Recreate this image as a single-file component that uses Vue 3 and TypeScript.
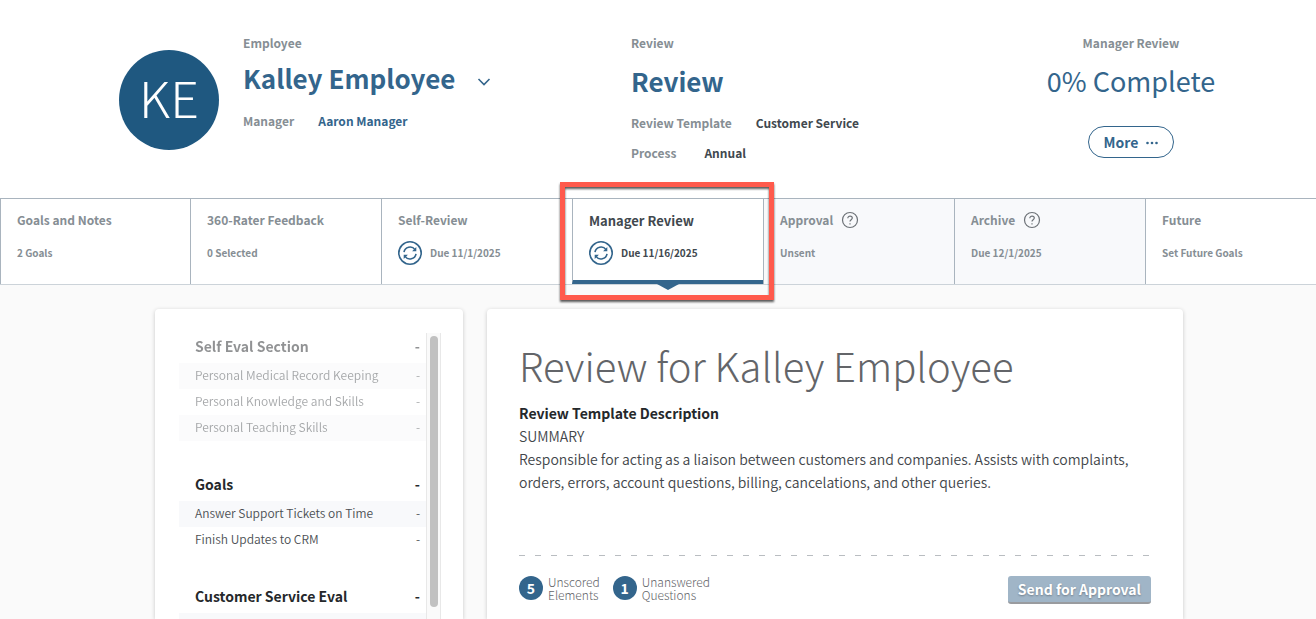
<script setup lang="ts">
interface Step {
  title: string
  note: string
  due?: boolean
  help?: boolean
  locked?: boolean
  active?: boolean
}

interface Section {
  title: string
  muted?: boolean
  items: string[]
}

const steps: Step[] = [
  { title: 'Goals and Notes', note: '2 Goals' },
  { title: '360-Rater Feedback', note: '0 Selected' },
  { title: 'Self-Review', note: 'Due 11/1/2025', due: true },
  { title: 'Manager Review', note: 'Due 11/16/2025', due: true, active: true },
  { title: 'Approval', note: 'Unsent', help: true, locked: true },
  { title: 'Archive', note: 'Due 12/1/2025', help: true, locked: true },
  { title: 'Future', note: 'Set Future Goals' },
]

const sections: Section[] = [
  {
    title: 'Self Eval Section',
    muted: true,
    items: ['Personal Medical Record Keeping', 'Personal Knowledge and Skills', 'Personal Teaching Skills'],
  },
  { title: 'Goals', items: ['Answer Support Tickets on Time', 'Finish Updates to CRM'] },
  { title: 'Customer Service Eval', items: [''] },
]
</script>

<template>
  <div class="page">
    <header class="summary">
      <div class="person">
        <div class="avatar">KE</div>
        <div>
          <div class="label">Employee</div>
          <div class="name-row">
            <h1 class="title">Kalley Employee</h1>
            <button class="chevron" type="button" aria-label="Switch employee">
              <svg viewBox="0 0 14 10" width="14" height="10"><path d="M1.5 2 7 7.5 12.5 2" /></svg>
            </button>
          </div>
          <div class="fact"><span class="label">Manager</span><a href="#">Aaron Manager</a></div>
        </div>
      </div>

      <div class="review">
        <div class="label">Review</div>
        <h2 class="title">Review</h2>
        <div class="fact"><span class="label">Review Template</span><span>Customer Service</span></div>
        <div class="fact process"><span class="label">Process</span><span>Annual</span></div>
      </div>

      <div class="progress">
        <div class="label">Manager Review</div>
        <div class="title percent">0% Complete</div>
        <button class="more" type="button">
          More
          <svg viewBox="0 0 12 4" width="12" height="4"><circle cx="1.5" cy="2" r="1.3" /><circle cx="6" cy="2" r="1.3" /><circle cx="10.5" cy="2" r="1.3" /></svg>
        </button>
      </div>
    </header>

    <nav class="steps">
      <a
        v-for="step in steps"
        :key="step.title"
        href="#"
        class="step"
        :class="{ active: step.active, locked: step.locked }"
      >
        <span class="step-title">
          {{ step.title }}
          <svg v-if="step.help" class="help" viewBox="0 0 18 18" width="18" height="18">
            <circle cx="9" cy="9" r="7.5" />
            <path d="M6.8 7.2C6.8 4.4 11.3 4.5 11.3 7.1 11.3 8.8 9 8.8 9 10.6" />
            <path d="M9 12.2V13.4" />
          </svg>
        </span>
        <span class="step-note">
          <svg v-if="step.due" class="sync" viewBox="0 0 24 24" width="24" height="24">
            <circle cx="12" cy="12" r="11.2" />
            <path d="M6 11.2A6.1 6.1 0 0 1 17 8.6M18 12.8A6.1 6.1 0 0 1 7 15.4" />
            <path class="tip" d="M18.3 6V10.2H14.1ZM5.7 18V13.8H9.9Z" />
          </svg>
          {{ step.note }}
        </span>
        <span v-if="step.active" class="highlight"></span>
      </a>
    </nav>

    <main class="body">
      <aside class="card outline">
        <div class="outline-list">
          <section v-for="section in sections" :key="section.title" :class="{ muted: section.muted }">
            <h3><span>{{ section.title }}</span><span>-</span></h3>
            <ul>
              <li v-for="item in section.items" :key="item">
                <template v-if="item"><span>{{ item }}</span><span>-</span></template>
              </li>
            </ul>
          </section>
        </div>
        <div class="track"><div class="thumb"></div></div>
      </aside>

      <article class="card content">
        <h2 class="headline">Review for Kalley Employee</h2>
        <h3 class="subhead">Review Template Description</h3>
        <p>SUMMARY</p>
        <p>
          Responsible for acting as a liaison between customers and companies. Assists with complaints, orders, errors,
          account questions, billing, cancelations, and other queries.
        </p>
        <div class="divider"></div>
        <footer class="actions">
          <div class="count"><b>5</b><span>Unscored<br />Elements</span></div>
          <div class="count"><b>1</b><span>Unanswered<br />Questions</span></div>
          <button class="send" type="button">Send for Approval</button>
        </footer>
      </article>
    </main>
  </div>
</template>

<style>
body {
  margin: 0;
  background: #fafafa;
}
</style>

<style scoped>
.page {
  display: flex;
  flex-direction: column;
  height: 100vh;
  overflow: hidden;
  background: #fafafa;
  color: #25282b;
  font-family: "Noto Sans CJK SC", "Open Sans", sans-serif;
  font-size: 14px;
}
h1, h2, h3, p, ul {
  margin: 0;
  padding: 0;
}
a {
  color: #33658c;
  text-decoration: none;
}
button {
  padding: 0;
  border: 0;
  background: none;
  font-family: inherit;
}
.summary {
  display: grid;
  grid-template-columns: 512px 1fr 170px;
  flex: none;
  box-sizing: border-box;
  height: 198px;
  padding: 33px 100px 0 119px;
  background: #fff;
}
.person {
  display: flex;
  gap: 24px;
}
.avatar {
  box-sizing: border-box;
  width: 100px;
  height: 100px;
  margin-top: 17px;
  border-radius: 50%;
  background: #1f5880;
  color: #fff;
  font-size: 50px;
  font-weight: 300;
  line-height: 92px;
  text-align: center;
}
.label {
  color: #868e94;
  font-size: 12px;
  font-weight: 700;
  line-height: 20px;
}
.title {
  margin-top: 10px;
  color: #33658c;
  font-size: 26px;
  font-weight: 700;
  line-height: 36px;
  white-space: nowrap;
}
.name-row {
  display: flex;
  align-items: center;
  gap: 22px;
  margin: 7px 0 15px;
}
.name-row .title {
  margin: 0;
}
.chevron {
  display: flex;
  margin-top: 8px;
}
.chevron path {
  fill: none;
  stroke: #33658c;
  stroke-width: 1.6;
}
.fact {
  display: flex;
  gap: 24px;
  color: #41484e;
  font-size: 12px;
  font-weight: 700;
  line-height: 20px;
}
.review .fact {
  margin-top: 14px;
}
.review .process {
  gap: 28px;
  margin-top: 10px;
}
.progress {
  display: flex;
  flex-direction: column;
  align-items: center;
}
.percent {
  font-size: 27px;
  font-weight: 400;
}
.more {
  display: flex;
  align-items: center;
  justify-content: center;
  gap: 8px;
  box-sizing: border-box;
  width: 86px;
  height: 32px;
  margin-top: 27px;
  border: 1px solid #33658c;
  border-radius: 16px;
  color: #33658c;
  font-size: 14px;
  font-weight: 700;
  line-height: 20px;
}
.more svg {
  margin-top: 2px;
  fill: #33658c;
}
.steps {
  display: grid;
  grid-template-columns: 190px repeat(6, 191px);
  flex: none;
  border-top: 1px solid #a9b4be;
  border-bottom: 1px solid #ccd3d9;
}
.step {
  position: relative;
  box-sizing: border-box;
  height: 85px;
  padding: 11px 0 0 16px;
  border-left: 1px solid #a9b4be;
  background: #fff;
  color: #868e94;
  font-weight: 700;
}
.step.locked {
  background: #f8f9fb;
}
.step.active {
  z-index: 1;
  border-bottom: 4px solid #33658c;
  color: #41484e;
}
.step.active::after {
  content: "";
  position: absolute;
  top: calc(100% + 4px);
  left: 50%;
  width: 22px;
  height: 6px;
  margin-left: -11px;
  background: #33658c;
  clip-path: polygon(0 0, 100% 0, 50% 100%);
}
.step-title,
.step-note {
  display: flex;
  align-items: center;
  gap: 8px;
}
.step-title {
  font-size: 12px;
  line-height: 20px;
}
.active .step-title {
  font-size: 13px;
  line-height: 22px;
}
.step-note {
  height: 24px;
  margin-top: 11px;
  font-size: 10px;
  line-height: 16px;
}
.active .step-note {
  margin-top: 9px;
}
.help {
  fill: none;
  stroke: #6d7277;
  stroke-width: 1.2;
}
.sync {
  fill: none;
  stroke: #33658c;
  stroke-width: 1.6;
}
.sync .tip {
  fill: #33658c;
  stroke: none;
}
.highlight {
  position: absolute;
  top: -17px;
  left: -13px;
  width: 204px;
  height: 108px;
  border: 5px solid #ff5a4c;
  filter: drop-shadow(0 2px 1px rgba(0, 0, 0, 0.65));
  pointer-events: none;
}
.body {
  display: flex;
  gap: 24px;
  flex: 1;
  min-height: 0;
  padding: 24px 133px 0 155px;
}
.card {
  box-sizing: border-box;
  border-radius: 4px 4px 0 0;
  background: #fff;
  box-shadow: 0 1px 4px rgba(0, 0, 0, 0.2);
}
.outline {
  display: flex;
  flex: none;
  width: 308px;
  padding: 24px 22px 0 24px;
}
.outline-list {
  flex: 1;
  overflow: hidden;
}
.outline section {
  margin-bottom: 30px;
}
.outline h3,
.outline li {
  display: flex;
  justify-content: space-between;
  padding: 0 6px 0 16px;
}
.outline h3 {
  padding-bottom: 3px;
  font-size: 14px;
  font-weight: 700;
  line-height: 27px;
}
.outline li {
  min-height: 26px;
  color: #4b4f53;
  font-size: 12px;
  font-weight: 350;
  line-height: 24px;
}
.outline li:nth-child(odd) {
  background: #f8f9fb;
}
.muted {
  opacity: 0.5;
}
.track {
  box-sizing: border-box;
  width: 15px;
  padding: 3px 2px 0 3px;
  border: solid #e8e8e8;
  border-width: 0 1px;
  background: #fafafa;
}
.thumb {
  width: 8px;
  height: 271px;
  border-radius: 4px;
  background: #c1c1c1;
}
.content {
  flex: 1;
  min-width: 0;
  padding: 30px 32px 0;
}
.headline {
  color: #636569;
  font-size: 40px;
  font-weight: 300;
  line-height: 52px;
}
.subhead {
  margin-top: 11px;
  font-size: 14px;
  font-weight: 700;
  line-height: 23px;
}
.content p {
  color: #42464a;
  font-size: 14px;
  font-weight: 350;
  line-height: 23px;
}
.divider {
  height: 1px;
  margin: 61px 0 20px;
  background: repeating-linear-gradient(90deg, #b9bdc1 0 6px, transparent 6px 16px);
}
.actions {
  display: flex;
  align-items: flex-start;
  gap: 13px;
}
.count {
  display: flex;
  gap: 5px;
  color: #636569;
  font-size: 12px;
  font-weight: 300;
  line-height: 13px;
}
.count span {
  margin-top: -1px;
}
.count b {
  width: 24px;
  height: 24px;
  border-radius: 50%;
  background: #33658c;
  color: #fff;
  font-size: 14px;
  font-weight: 700;
  line-height: 24px;
  text-align: center;
}
.send {
  height: 28px;
  margin-left: auto;
  padding: 0 10px;
  border-bottom: 2px solid #999b9f;
  border-radius: 3px;
  background: #a0b5c7;
  color: #fff;
  font-size: 14px;
  font-weight: 700;
  line-height: 26px;
  text-shadow: 0 1px 2px rgba(0, 0, 0, 0.3);
}
</style>
